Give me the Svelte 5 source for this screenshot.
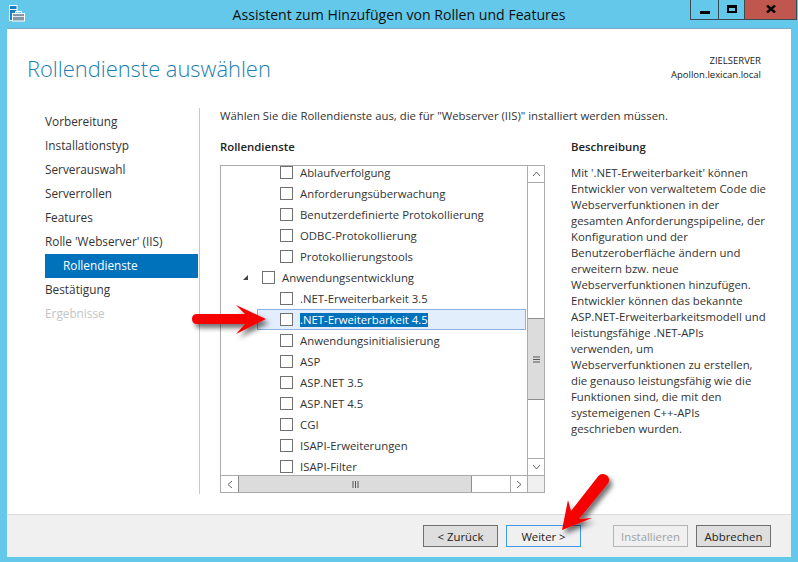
<script>
  const steps = [
    { label: 'Vorbereitung' },
    { label: 'Installationstyp' },
    { label: 'Serverauswahl' },
    { label: 'Serverrollen' },
    { label: 'Features' },
    { label: "Rolle 'Webserver' (IIS)" },
    { label: 'Rollendienste', sub: true, active: true },
    { label: 'Bestätigung' },
    { label: 'Ergebnisse', disabled: true }
  ];

  const services = [
    { label: 'Ablaufverfolgung' },
    { label: 'Anforderungsüberwachung' },
    { label: 'Benutzerdefinierte Protokollierung' },
    { label: 'ODBC-Protokollierung' },
    { label: 'Protokollierungstools' },
    { label: 'Anwendungsentwicklung', parent: true },
    { label: '.NET-Erweiterbarkeit 3.5' },
    { label: '.NET-Erweiterbarkeit 4.5', selected: true },
    { label: 'Anwendungsinitialisierung' },
    { label: 'ASP' },
    { label: 'ASP.NET 3.5' },
    { label: 'ASP.NET 4.5' },
    { label: 'CGI' },
    { label: 'ISAPI-Erweiterungen' },
    { label: 'ISAPI-Filter' }
  ];

  const description = [
    "Mit '.NET-Erweiterbarkeit' können",
    'Entwickler von verwaltetem Code die',
    'Webserverfunktionen in der',
    'gesamten Anforderungspipeline, der',
    'Konfiguration und der',
    'Benutzeroberfläche ändern und',
    'erweitern bzw. neue',
    'Webserverfunktionen hinzufügen.',
    'Entwickler können das bekannte',
    'ASP.NET-Erweiterbarkeitsmodell und',
    'leistungsfähige .NET-APIs',
    'verwenden, um',
    'Webserverfunktionen zu erstellen,',
    'die genauso leistungsfähig wie die',
    'Funktionen sind, die mit den',
    'systemeigenen C++-APIs',
    'geschrieben wurden.'
  ];
</script>

<div class="desktop">
  <header class="titlebar">
    <svg class="app-icon" width="17" height="17" viewBox="0 0 17 17">
      <rect x="0.5" y="0.5" width="7.500" height="15" fill="#1c7cc4" stroke="#fff" />
      <rect x="1" y="4" width="7" height="1" fill="#fff" />
      <rect x="3.500" y="8.500" width="12" height="7.500" fill="#8298a6" stroke="#fff" />
      <path d="M6.500 8.500V6.500h6v2" fill="none" stroke="#fff" />
      <rect x="4" y="11" width="11" height="1" fill="#dfe8ec" />
    </svg>
    <h1 class="wintitle">Assistent zum Hinzufügen von Rollen und Features</h1>
    <div class="controls">
      <span class="ctl min">
        <span class="min-glyph"></span>
      </span>
      <span class="ctl max">
        <span class="max-glyph"></span>
      </span>
      <span class="ctl close">
        <svg width="10" height="8" viewBox="0 0 10 8"><path d="M1 0.500l8 7M9 0.500l-8 7" stroke="#000" stroke-width="2.400" fill="none" /></svg>
      </span>
    </div>
  </header>

  <div class="window">
    <div class="page">
      <div class="heading">
        <h2>Rollendienste auswählen</h2>
        <div class="target">
          <div>ZIELSERVER</div>
          <div>Apollon.lexican.local</div>
        </div>
      </div>

      <div class="main">
        <nav class="steps">
          {#each steps as step}
            <div class="step" class:sub={step.sub} class:active={step.active} class:disabled={step.disabled}>{step.label}</div>
          {/each}
        </nav>

        <section class="content">
          <p class="intro">Wählen Sie die Rollendienste aus, die für "Webserver (IIS)" installiert werden müssen.</p>
          <div class="columns">
            <div class="left">
              <h3>Rollendienste</h3>
              <div class="treebox">
                <div class="tree-top">
                  <div class="tree">
                    {#each services as item}
                      <div class="row" class:parent={item.parent} class:selected={item.selected}>
                        {#if item.parent}
                          <svg class="expander" width="7" height="7" viewBox="0 0 7 7"><path d="M6 1v5H1z" fill="#444" /></svg>
                        {/if}
                        <span class="check"></span>
                        <span class="label">{item.label}</span>
                      </div>
                    {/each}
                  </div>
                  <div class="vscroll">
                    <span class="sbtn">
                      <svg width="9" height="6" viewBox="0 0 9 6"><path d="M1 5l3.500-4L8 5" fill="none" stroke="#666" /></svg>
                    </span>
                    <div class="vtrack">
                      <div class="vthumb">
                        <svg width="7" height="7" viewBox="0 0 7 7"><path d="M0 1h7M0 3.500h7M0 6h7" stroke="#555" /></svg>
                      </div>
                    </div>
                    <span class="sbtn">
                      <svg width="9" height="6" viewBox="0 0 9 6"><path d="M1 1l3.500 4L8 1" fill="none" stroke="#666" /></svg>
                    </span>
                  </div>
                </div>
                <div class="hscroll">
                  <span class="hbtn">
                    <svg width="6" height="9" viewBox="0 0 6 9"><path d="M5 1L1 4.500 5 8" fill="none" stroke="#666" /></svg>
                  </span>
                  <div class="htrack">
                    <div class="hthumb">
                      <svg width="7" height="7" viewBox="0 0 7 7"><path d="M1 0v7M3.500 0v7M6 0v7" stroke="#555" /></svg>
                    </div>
                  </div>
                  <span class="hbtn right">
                    <svg width="6" height="9" viewBox="0 0 6 9"><path d="M1 1l4 3.500L1 8" fill="none" stroke="#666" /></svg>
                  </span>
                  <span class="corner"></span>
                </div>
              </div>
            </div>
            <aside class="desc">
              <h3>Beschreibung</h3>
              <div class="desc-text">
                {#each description as line}
                  <div>{line}</div>
                {/each}
              </div>
            </aside>
          </div>
        </section>
      </div>
    </div>

    <footer class="footer">
      <button class="btn">&lt; Zurück</button>
      <button class="btn primary">Weiter &gt;</button>
      <button class="btn off">Installieren</button>
      <button class="btn">Abbrechen</button>
    </footer>
  </div>

  <!-- annotation arrows painted over the screenshot -->
  <svg class="arrows" width="798" height="562" viewBox="0 0 798 562">
    <defs>
      <filter id="soft" x="-20%" y="-30%" width="150%" height="170%">
        <feDropShadow dx="3" dy="4" stdDeviation="2.500" flood-color="#000" flood-opacity="0.55" />
      </filter>
    </defs>
    <path filter="url(#soft)" fill="#f60000" d="M197 314 H245 L236 305 L266 319 L236 334 L245 324 H197 Q192 324 192 319 Q192 314 197 314Z" />
    <path filter="url(#soft)" fill="#f60000" d="M598.400 476 A6 6 0 0 1 607.600 484 L579 519 L592 518 L562 530 L568 500 L571 511Z" />
  </svg>
</div>

<style>
  :global(body) {
    margin: 0;
    font-family: "Open Sans", "Noto Sans", sans-serif;
    font-size: 11.350px;
    color: #333;
  }

  .desktop {
    position: relative;
    width: 798px;
    height: 562px;
    overflow: hidden;
    background: #63c8ea;
    display: flex;
    flex-direction: column;
  }

  .titlebar {
    height: 28px;
    flex: none;
    display: flex;
    align-items: flex-start;
    position: relative;
  }

  .app-icon {
    position: absolute;
    left: 9px;
    top: 5px;
  }

  .wintitle {
    flex: 1;
    margin: 5px 0 0;
    font-size: 14.100px;
    font-weight: 400;
    line-height: 20px;
    color: #111;
    text-align: center;
  }

  .controls {
    position: absolute;
    right: 1px;
    top: 0;
    display: flex;
    height: 19px;
    border: 1px solid #3a4a52;
    border-top: 0;
  }

  .ctl {
    display: flex;
    align-items: center;
    justify-content: center;
    border-right: 1px solid #3a4a52;
  }

  .ctl.min {
    width: 27px;
  }

  .ctl.max {
    width: 25px;
  }

  .ctl.close {
    width: 51px;
    background: #c0574f;
    border-right: 0;
    padding-bottom: 1px;
  }

  .min-glyph {
    width: 10px;
    height: 3px;
    margin-top: 5px;
    background: #000;
  }

  .max-glyph {
    width: 6px;
    height: 3px;
    margin-bottom: 1px;
    border: 2px solid #000;
    border-top-width: 3px;
  }

  .window {
    flex: 1;
    margin: 0 7px 5px;
    background: #fff;
    border-top: 1px solid #7fa9c2;
    display: flex;
    flex-direction: column;
    min-height: 0;
  }

  .page {
    flex: 1;
    display: flex;
    flex-direction: column;
    min-height: 0;
  }

  .heading {
    height: 79px;
    display: flex;
    justify-content: space-between;
    padding: 0 30px 0 20px;
    flex: none;
  }

  h2 {
    margin: 24px 0 0;
    font-size: 21.900px;
    line-height: 32px;
    font-weight: 300;
    color: #1a80b0;
  }

  .target {
    margin-top: 25px;
    font-size: 9.500px;
    line-height: 14px;
    text-align: right;
    color: #222;
  }

  .main {
    flex: 1;
    display: flex;
    min-height: 0;
  }

  .steps {
    width: 153px;
    margin-left: 38px;
    padding-top: 2px;
    flex: none;
    height: 386px;
    box-sizing: border-box;
    font-size: 11.800px;
  }

  .step {
    height: 24px;
    line-height: 23px;
    color: #333;
  }

  .step.sub {
    padding-left: 18px;
  }

  .step.active {
    background: #0072bc;
    color: #fff;
  }

  .step.disabled {
    color: #c4c4c4;
  }

  .content {
    width: 572px;
    height: 386px;
    margin-left: 1px;
    box-sizing: border-box;
    border-left: 1px solid #c8c8c8;
    padding-left: 20px;
  }

  .intro {
    margin: 0;
    line-height: 16px;
  }

  .columns {
    display: flex;
    margin-top: 15px;
  }

  h3 {
    margin: 0;
    font-size: 11.350px;
    line-height: 16px;
    font-weight: 600;
    color: #222;
  }

  .left {
    width: 351px;
    flex: none;
  }

  .treebox {
    width: 325px;
    height: 328px;
    margin-top: 10px;
    box-sizing: border-box;
    border: 1px solid #ababab;
    display: flex;
    flex-direction: column;
    background: #fff;
  }

  .tree-top {
    flex: 1;
    display: flex;
    min-height: 0;
  }

  .tree {
    flex: 1;
    overflow: hidden;
  }

  .row {
    height: 21px;
    display: flex;
    align-items: center;
    padding-left: 59px;
    box-sizing: border-box;
    position: relative;
    white-space: nowrap;
  }

  .row:first-child {
    margin-top: -4px;
  }

  .row.parent {
    padding-left: 41px;
  }

  .expander {
    position: absolute;
    left: 21px;
    top: 7px;
  }

  .row.selected {
    background: #e2eefc;
    border: 1px solid #8db2dd;
    margin-left: 36px;
    margin-right: 1px;
    padding-left: 22px;
  }

  .check {
    width: 11px;
    height: 11px;
    flex: none;
    border: 1px solid #707070;
    background: #fff;
    margin-right: 7px;
  }

  .label {
    line-height: 14px;
  }

  .selected .label {
    background: #0072bc;
    color: #fff;
  }

  .vscroll {
    width: 16px;
    flex: none;
    border-left: 1px solid #ababab;
    display: flex;
    flex-direction: column;
  }

  .sbtn {
    height: 16px;
    flex: none;
    display: flex;
    align-items: center;
    justify-content: center;
  }

  .sbtn:first-child {
    border-bottom: 1px solid #ababab;
  }

  .sbtn:last-child {
    border-top: 1px solid #ababab;
  }

  .vtrack {
    flex: 1;
    padding-top: 135px;
  }

  .vthumb {
    height: 80px;
    background: #dcdcdc;
    border-top: 1px solid #8f8f8f;
    border-bottom: 1px solid #8f8f8f;
    display: flex;
    align-items: center;
    justify-content: center;
  }

  .hscroll {
    height: 16px;
    flex: none;
    border-top: 1px solid #ababab;
    display: flex;
  }

  .hbtn {
    width: 17px;
    flex: none;
    display: flex;
    align-items: center;
    justify-content: center;
  }

  .hbtn.right {
    box-sizing: border-box;
    border-left: 1px solid #ababab;
  }

  .htrack {
    flex: 1;
    background: #fff;
  }

  .hthumb {
    width: 234px;
    height: 100%;
    background: #dcdcdc;
    border-left: 1px solid #8f8f8f;
    border-right: 1px solid #8f8f8f;
    box-sizing: border-box;
    display: flex;
    align-items: center;
    justify-content: center;
  }

  .corner {
    width: 16px;
    flex: none;
    background: #f0f0f0;
    border-left: 1px solid #ababab;
  }

  .desc-text {
    margin-top: 10px;
    line-height: 16px;
    white-space: nowrap;
  }

  .footer {
    height: 42px;
    flex: none;
    background: #f0f0f0;
    border-top: 1px solid #dcdcdc;
    display: flex;
    align-items: center;
    padding: 0 20px 0 416px;
  }

  .btn {
    width: 75px;
    height: 22px;
    box-sizing: border-box;
    padding: 0;
    border: 1px solid #707070;
    background: #dedede;
    font: inherit;
    color: #222;
    margin-right: 8px;
  }

  .btn.primary {
    border-color: #3c9ae8;
    background: #f0f0f0;
    margin-right: 32px;
  }

  .btn.off {
    border-color: #b5b5b5;
    background: #f0f0f0;
    color: #a0a0a0;
  }

  .btn:last-child {
    margin-right: 0;
  }

  .arrows {
    position: absolute;
    inset: 0;
    pointer-events: none;
  }
</style>
